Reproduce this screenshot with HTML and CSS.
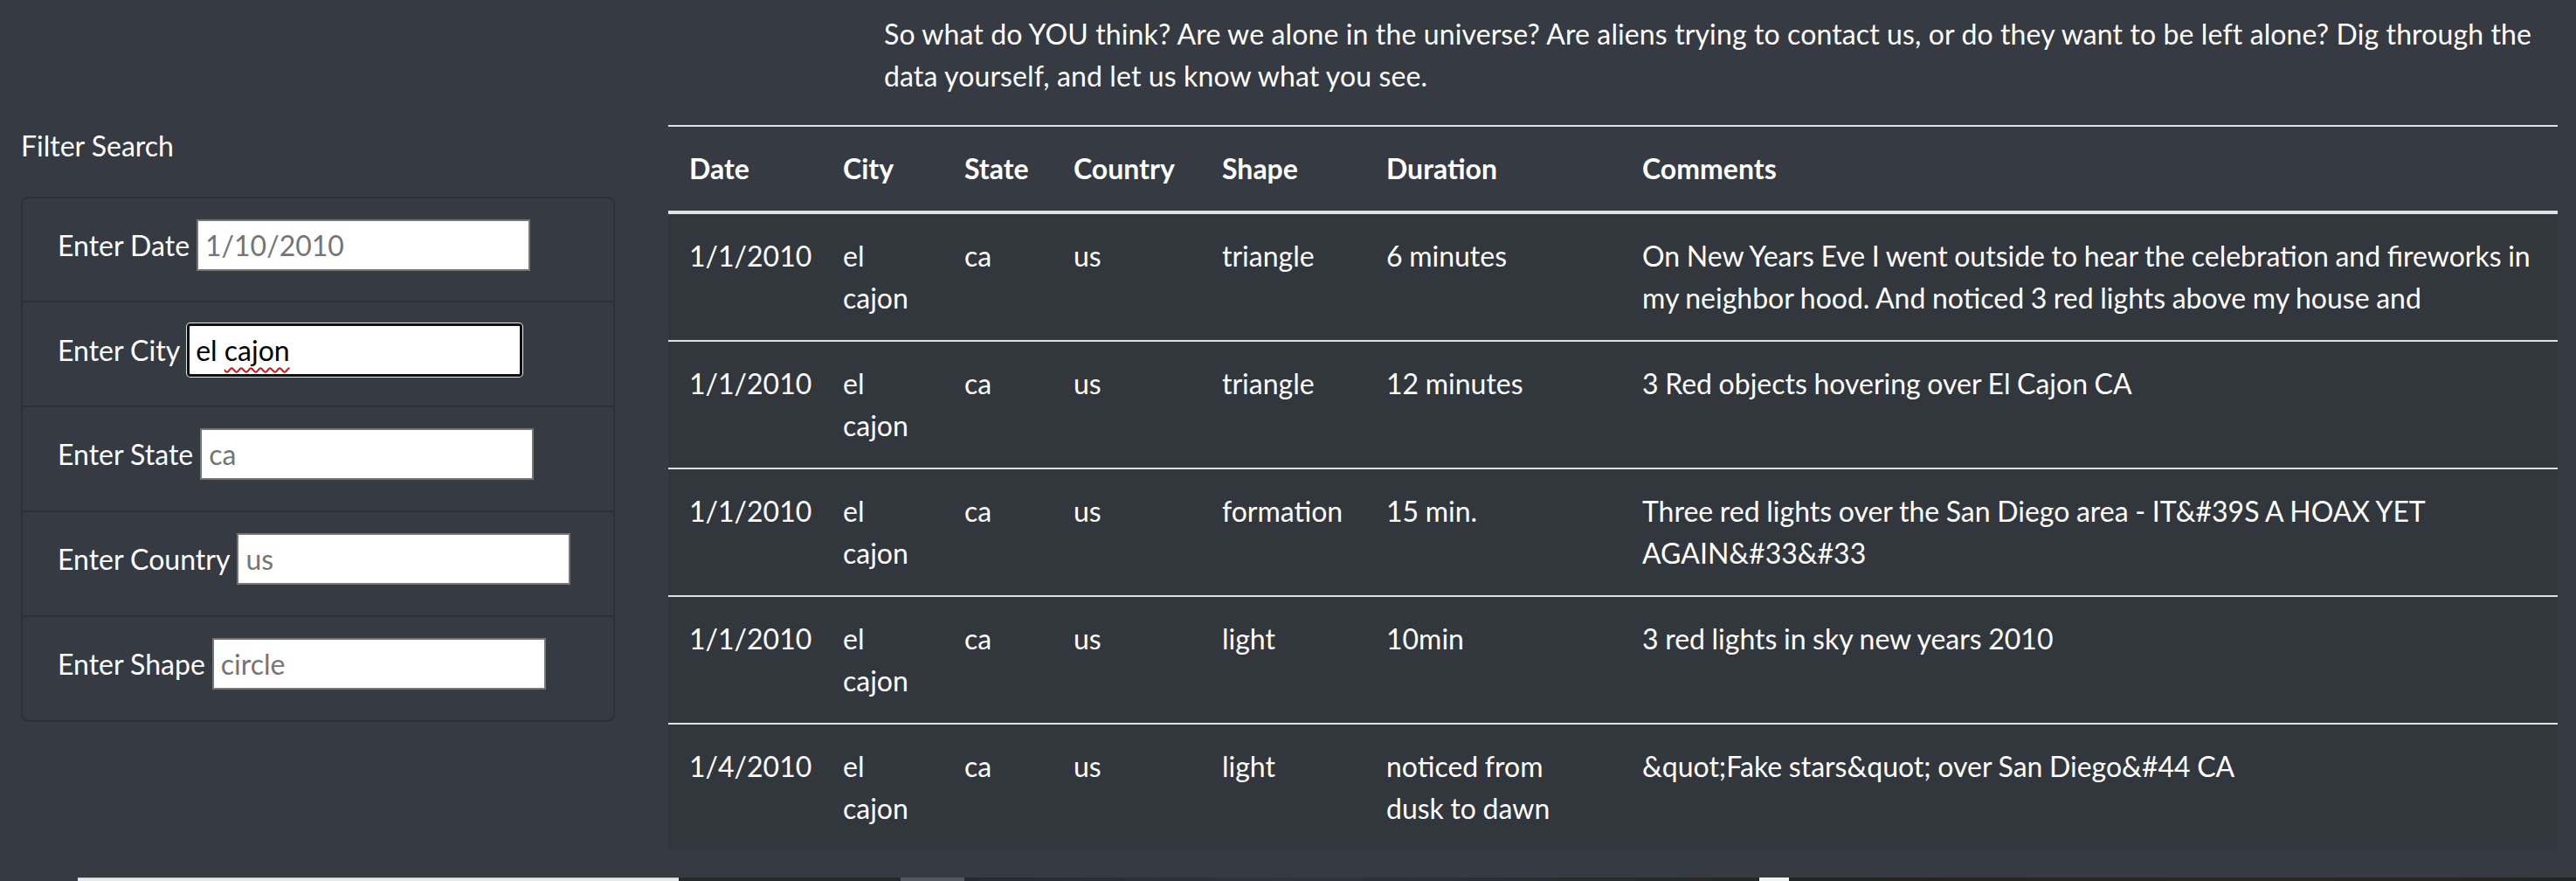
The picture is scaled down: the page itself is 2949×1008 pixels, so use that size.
FILE: index.html
```html
<!DOCTYPE html>
<html lang="en">
<head>
<meta charset="utf-8">
<title>UFO Sightings</title>
<link rel="stylesheet" href="styles.css">
</head>
<body>
<div class="page">
  <p class="intro">So what do YOU think? Are we alone in the universe? Are aliens trying to contact us, or do they want to be left alone? Dig through the data yourself, and let us know what you see.</p>

  <aside class="sidebar">
    <div class="filter-title">Filter Search</div>
    <ul class="filters">
      <li class="filter-item"><label class="filter-label" for="datetime">Enter Date</label><input class="field" id="datetime" type="text" placeholder="1/10/2010"></li>
      <li class="filter-item"><label class="filter-label">Enter City</label><div class="field field-focus" role="textbox">el <span class="misspelled">cajon</span></div></li>
      <li class="filter-item"><label class="filter-label" for="state">Enter State</label><input class="field" id="state" type="text" placeholder="ca"></li>
      <li class="filter-item"><label class="filter-label" for="country">Enter Country</label><input class="field" id="country" type="text" placeholder="us"></li>
      <li class="filter-item"><label class="filter-label" for="shape">Enter Shape</label><input class="field" id="shape" type="text" placeholder="circle"></li>
    </ul>
  </aside>

  <table class="ufo-table">
    <colgroup>
      <col class="c-date"><col class="c-city"><col class="c-state"><col class="c-country"><col class="c-shape"><col class="c-duration"><col class="c-comments">
    </colgroup>
    <thead>
      <tr><th>Date</th><th>City</th><th>State</th><th>Country</th><th>Shape</th><th>Duration</th><th>Comments</th></tr>
    </thead>
    <tbody>
      <tr><td>1/1/2010</td><td>el cajon</td><td>ca</td><td>us</td><td>triangle</td><td>6 minutes</td><td>On New Years Eve I went outside to hear the celebration and fireworks in my neighbor hood. And noticed 3 red lights above my house and</td></tr>
      <tr><td>1/1/2010</td><td>el cajon</td><td>ca</td><td>us</td><td>triangle</td><td>12 minutes</td><td>3 Red objects hovering over El Cajon CA</td></tr>
      <tr><td>1/1/2010</td><td>el cajon</td><td>ca</td><td>us</td><td>formation</td><td>15 min.</td><td>Three red lights over the San Diego area - IT&amp;#39S A HOAX YET AGAIN&amp;#33&amp;#33</td></tr>
      <tr><td>1/1/2010</td><td>el cajon</td><td>ca</td><td>us</td><td>light</td><td>10min</td><td>3 red lights in sky new years 2010</td></tr>
      <tr><td>1/4/2010</td><td>el cajon</td><td>ca</td><td>us</td><td>light</td><td>noticed from dusk to dawn</td><td>&amp;quot;Fake stars&amp;quot; over San Diego&amp;#44 CA</td></tr>
    </tbody>
  </table>
</div>
<div class="strip">
  <span class="seg seg-a"></span><span class="seg seg-b"></span><span class="seg seg-c"></span><span class="seg seg-d"></span><span class="seg seg-e"></span><span class="seg seg-f"></span><span class="seg seg-g"></span>
</div>
</body>
</html>
```
FILE: styles.css
```css
html, body {
  margin: 0;
  padding: 0;
}
body {
  height: 1008px;
  overflow: hidden;
  background: #363a42;
  color: #fff;
  font-family: "Lato", "Liberation Sans", sans-serif;
  font-size: 32px;
  line-height: 48px;
  display: flex;
  flex-direction: column;
}
.page {
  display: grid;
  grid-template-columns: 765px 2163px;
  grid-template-rows: auto auto;
  padding-top: 15px;
}
.intro {
  grid-column: 2;
  grid-row: 1;
  margin: 0 0 32px;
  padding-left: 247px;
  letter-spacing: 0.12px;
}
.sidebar {
  grid-column: 1;
  grid-row: 2;
  padding-left: 24px;
  width: 704px;
  box-sizing: border-box;
}
.filter-title {
  margin: 0 0 34px;
}
.filters {
  list-style: none;
  margin: 0;
  padding: 0;
  border: 2px solid #2c3037;
  border-radius: 8px;
}
.filter-item {
  display: flex;
  align-items: baseline;
  gap: 8px;
  height: 94px;
  padding: 24px 40px 0;
  border-top: 2px solid #2c3037;
}
.filter-item:first-child {
  border-top: none;
  height: 93px;
}
.filter-label {
  white-space: nowrap;
}
.field {
  width: 382px;
  height: 59px;
  box-sizing: border-box;
  border: 2px solid #767676;
  background: #fff;
  color: #000;
  padding: 0 8px;
  font-family: inherit;
  font-size: 32px;
  line-height: 48px;
  border-radius: 0;
  outline: none;
  display: block;
}
.field::placeholder {
  color: #757575;
  opacity: 1;
}
.field-focus {
  width: 384px;
  height: 61px;
  border: 3px solid #101010;
  border-radius: 4px;
  box-shadow: 0 0 0 1px #e8e8e8;
  padding: 4px 7px 0;
  white-space: nowrap;
}
.misspelled {
  text-decoration: underline wavy #e00000;
  text-decoration-thickness: 2px;
  text-underline-offset: 7px;
}
.ufo-table {
  grid-column: 2;
  grid-row: 2;
  width: 2163px;
  border-collapse: collapse;
  table-layout: fixed;
  background: #32363d;
  align-self: start;
}
.c-date { width: 176px; }
.c-city { width: 139px; }
.c-state { width: 125px; }
.c-country { width: 170px; }
.c-shape { width: 188px; }
.c-duration { width: 293px; }
.c-comments { width: 1072px; }
.ufo-table th,
.ufo-table td {
  padding: 24px;
  text-align: left;
  vertical-align: top;
  border-top: 2px solid #dee2e6;
}
.ufo-table td {
  word-spacing: -0.6px;
}
.ufo-table th {
  font-weight: 700;
  vertical-align: bottom;
  border-bottom: 4px solid #dee2e6;
}
.ufo-table thead {
  background: #363a42;
}
.ufo-table tbody tr:first-child td {
  border-top: none;
}
.strip {
  margin-top: auto;
  height: 4px;
  display: flex;
}
.seg { display: block; height: 4px; }
.seg-a { width: 89px; background: #363a42; }
.seg-b { width: 688px; background: linear-gradient(#c8c8c8 0 1px, #e9e9e9 1px); }
.seg-c { width: 254px; background: #26282b; }
.seg-d { width: 73px; background: #55585d; }
.seg-e { width: 910px; background: linear-gradient(90deg, #262a2e, #30353b 40%, #2a2d31 70%, #262626); }
.seg-f { width: 34px; background: #f2f2f2; }
.seg-g { flex: 1; background: linear-gradient(90deg, #232323, #2b2824 60%, #242424); }
```
